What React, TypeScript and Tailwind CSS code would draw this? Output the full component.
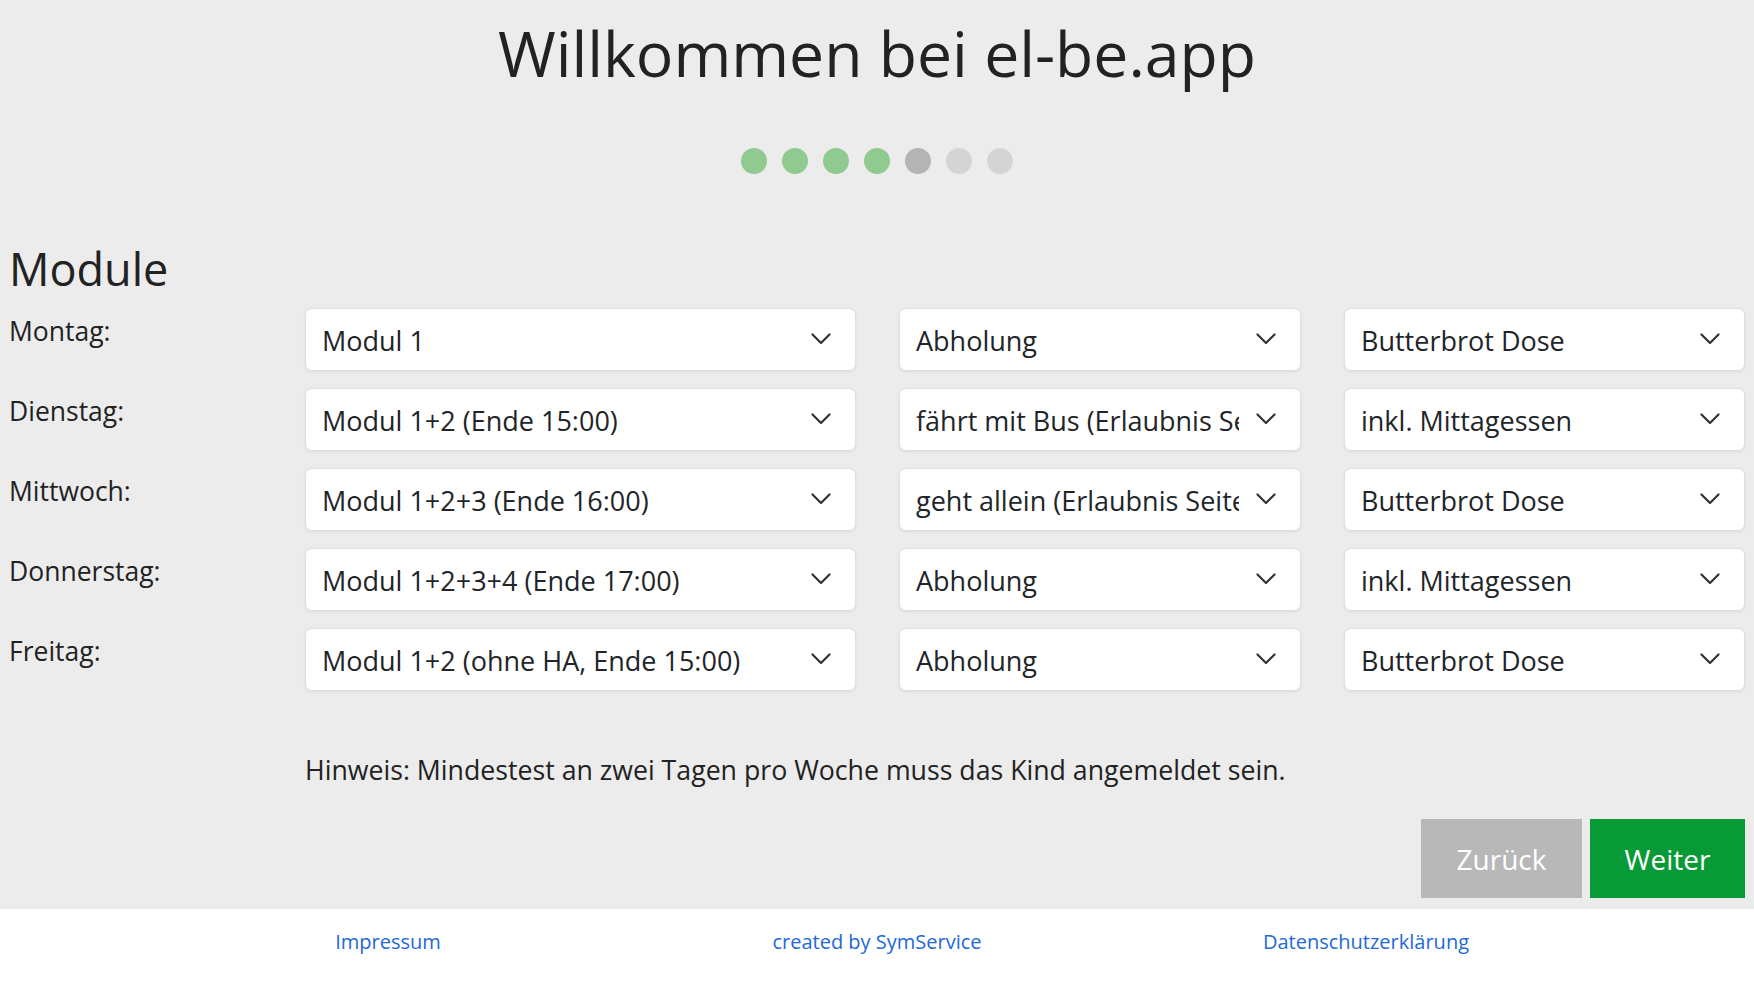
const font = { fontFamily: '"Open Sans", "Noto Sans", sans-serif' }

const rows = [
  { day: 'Montag:', modul: 'Modul 1', weg: 'Abholung', essen: 'Butterbrot Dose' },
  { day: 'Dienstag:', modul: 'Modul 1+2 (Ende 15:00)', weg: 'fährt mit Bus (Erlaubnis Seite 5)', essen: 'inkl. Mittagessen' },
  { day: 'Mittwoch:', modul: 'Modul 1+2+3 (Ende 16:00)', weg: 'geht allein (Erlaubnis Seite 5)', essen: 'Butterbrot Dose' },
  { day: 'Donnerstag:', modul: 'Modul 1+2+3+4 (Ende 17:00)', weg: 'Abholung', essen: 'inkl. Mittagessen' },
  { day: 'Freitag:', modul: 'Modul 1+2 (ohne HA, Ende 15:00)', weg: 'Abholung', essen: 'Butterbrot Dose' },
]

const dots = ['#90ca90', '#90ca90', '#90ca90', '#90ca90', '#b4b4b4', '#d4d4d4', '#d4d4d4']

function Chevron() {
  return (
    <svg width="20" height="12" viewBox="0 0 20 12" fill="none">
      <polyline points="1.5,1.5 10,10 18.5,1.5" stroke="#333" strokeWidth="2.2" strokeLinecap="round" strokeLinejoin="round" />
    </svg>
  )
}

function Select({ value }: { value: string }) {
  return (
    <div className="relative h-[63px]">
      <select
        defaultValue={value}
        className="h-full w-full appearance-none rounded-[7px] border border-[#e0e0e0] bg-white pl-[16px] pr-[61px] pt-[4px] text-[27px] text-[#212529] shadow-[0_1px_3px_rgba(0,0,0,0.07)] outline-none"
        style={font}
      >
        <option>{value}</option>
      </select>
      <div className="pointer-events-none absolute right-[25px] top-[25px]">
        <Chevron />
      </div>
    </div>
  )
}

export default function App() {
  return (
    <div className="flex h-screen flex-col bg-[#ececec] text-[#222]" style={font}>
      <main className="flex flex-1 flex-col px-[9px]">
        <h1 className="pt-[22px] text-center text-[62.5px] leading-none font-normal">
          Willkommen bei el-be.app
        </h1>

        <div className="mt-[63px] flex justify-center gap-[15px]">
          {dots.map((c, i) => (
            <span key={i} className="block h-[26px] w-[26px] rounded-full" style={{ backgroundColor: c }} />
          ))}
        </div>

        <h2 className="mt-[72px] text-[45px] leading-none font-normal">Module</h2>

        <div className="mt-[17px] grid grid-cols-[253px_551px_402px_401px] gap-x-[43px] gap-y-[17px]">
          {rows.map((r) => (
            <div key={r.day} className="contents">
              <div className="pt-[10px] text-[26.5px] leading-none">{r.day}</div>
              <Select value={r.modul} />
              <Select value={r.weg} />
              <Select value={r.essen} />
            </div>
          ))}
        </div>

        <p className="ml-[296px] mt-[66px] text-[26.7px] leading-none">
          Hinweis: Mindestest an zwei Tagen pro Woche muss das Kind angemeldet sein.
        </p>

        <div className="mb-[11px] mt-auto flex justify-end gap-[8px]">
          <button className="h-[79px] w-[161px] bg-[#b8b8b8] text-[28px] text-white">Zurück</button>
          <button className="h-[79px] w-[155px] bg-[#079a37] text-[28px] text-white">Weiter</button>
        </div>
      </main>

      <footer className="h-[73px] bg-white">
        <div className="mx-auto grid w-[1467px] grid-cols-3 pt-[23px] text-center text-[20px] leading-none text-[#2469d6]">
          <a href="#">Impressum</a>
          <a href="#">created by SymService</a>
          <a href="#">Datenschutzerklärung</a>
        </div>
      </footer>
    </div>
  )
}
